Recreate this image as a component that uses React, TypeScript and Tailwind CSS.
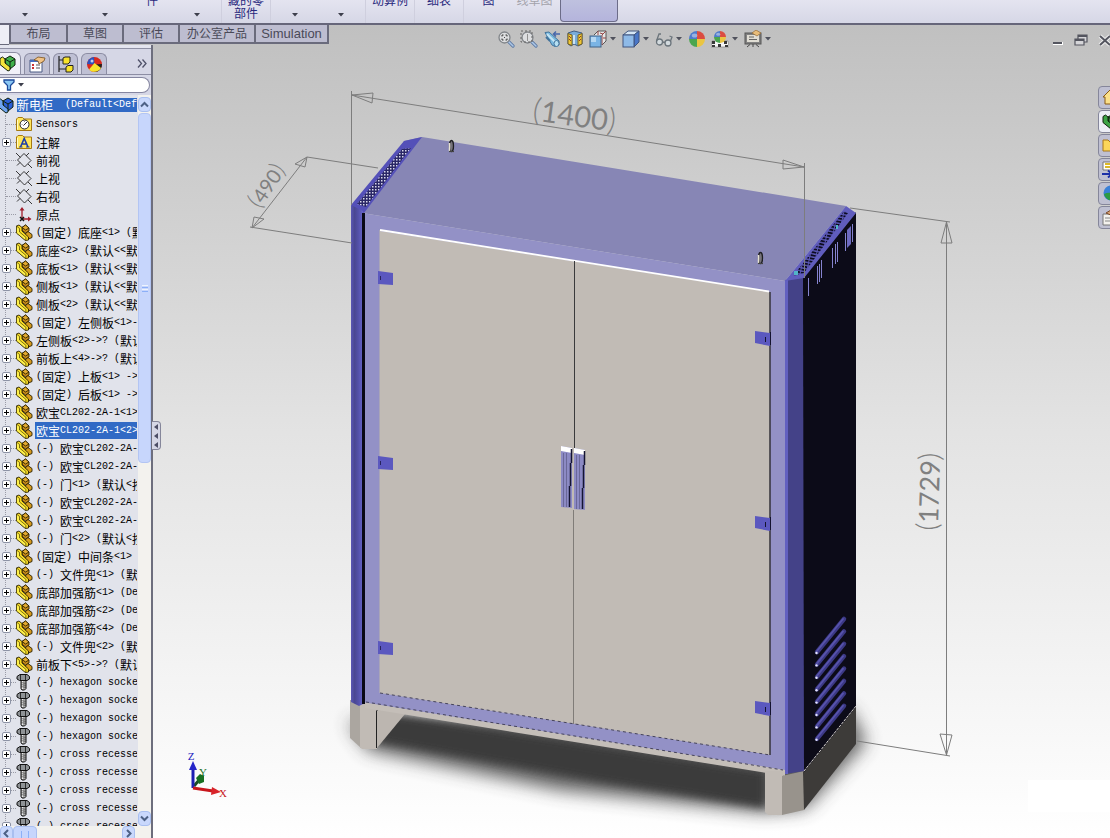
import type { ReactNode } from "react";
import clsx from "clsx";

const UI_FONT = "font-['Liberation_Sans','Noto_Sans_CJK_SC',sans-serif]";

type IconKind = "sensors" | "note" | "plane" | "origin" | "part" | "bolt";
type TreeItem = { icon: IconKind; label: string; leaf?: boolean; selected?: boolean };

const treeItems: TreeItem[] = [
  { icon: "sensors", label: "Sensors", leaf: true },
  { icon: "note", label: "注解" },
  { icon: "plane", label: "前视", leaf: true },
  { icon: "plane", label: "上视", leaf: true },
  { icon: "plane", label: "右视", leaf: true },
  { icon: "origin", label: "原点", leaf: true },
  { icon: "part", label: "(固定) 底座<1> (默认" },
  { icon: "part", label: "底座<2> (默认<<默" },
  { icon: "part", label: "底板<1> (默认<<默" },
  { icon: "part", label: "侧板<1> (默认<<默" },
  { icon: "part", label: "侧板<2> (默认<<默" },
  { icon: "part", label: "(固定) 左侧板<1>-" },
  { icon: "part", label: "左侧板<2>->? (默认" },
  { icon: "part", label: "前板上<4>->? (默认" },
  { icon: "part", label: "(固定) 上板<1> ->" },
  { icon: "part", label: "(固定) 后板<1> ->" },
  { icon: "part", label: "欧宝CL202-2A-1<1>" },
  { icon: "part", label: "欧宝CL202-2A-1<2>", selected: true },
  { icon: "part", label: "(-) 欧宝CL202-2A-" },
  { icon: "part", label: "(-) 欧宝CL202-2A-" },
  { icon: "part", label: "(-) 门<1> (默认<按" },
  { icon: "part", label: "(-) 欧宝CL202-2A-" },
  { icon: "part", label: "(-) 欧宝CL202-2A-" },
  { icon: "part", label: "(-) 门<2> (默认<按" },
  { icon: "part", label: "(固定) 中间条<1>" },
  { icon: "part", label: "(-) 文件兜<1> (默" },
  { icon: "part", label: "底部加强筋<1> (De" },
  { icon: "part", label: "底部加强筋<2> (De" },
  { icon: "part", label: "底部加强筋<4> (De" },
  { icon: "part", label: "(-) 文件兜<2> (默" },
  { icon: "part", label: "前板下<5>->? (默认" },
  { icon: "bolt", label: "(-) hexagon socke" },
  { icon: "bolt", label: "(-) hexagon socke" },
  { icon: "bolt", label: "(-) hexagon socke" },
  { icon: "bolt", label: "(-) hexagon socke" },
  { icon: "bolt", label: "(-) cross recesse" },
  { icon: "bolt", label: "(-) cross recesse" },
  { icon: "bolt", label: "(-) cross recesse" },
  { icon: "bolt", label: "(-) cross recesse" },
  { icon: "bolt", label: "(-) cross recesse" },
];

// latin runs take half of a chinese cell
const Label = ({ text }: { text: string }) => (
  <>
    {text.split(/([\x20-\x7e]+)/).map((run, i) => (
      <span
        key={i}
        className={
          i % 2 ? "font-['Liberation_Mono',monospace] text-[10px]" : undefined
        }
      >
        {run}
      </span>
    ))}
  </>
);

const TreeIcon = ({ kind }: { kind: IconKind }) => (
  <svg viewBox="0 0 17 17" className="h-[17px] w-[17px] shrink-0">
    {kind === "part" && (
      <g stroke="#2c2300" strokeWidth="0.9" strokeLinejoin="round">
        <path d="M6 3.500 9.500 1 13 4V7L9.500 9 6 6.500Z" fill="#c78a18" />
        <path d="M6 3.500 9.500 1 13 4 9.500 6Z" fill="#e3aa30" />
        <path d="M9 10 12 7.500 16 10.500V13.500L12.500 15Z" fill="#d79b1e" />
        <path d="M.500 2 3 1 6 3.500V7L12.500 13V16L9.500 16.500 .500 9Z" fill="#f6da22" />
        <path d="M.500 2 3.500 4.500V8L10 13.500 9.500 16.500 .500 9Z" fill="#fff04a" strokeWidth=".6" />
      </g>
    )}
    {kind === "bolt" && (
      <g stroke="#111" strokeWidth="1">
        <path d="M1 2.500 4 .500H11L13.500 2.500V5L11 6.500H3.500L1 5Z" fill="#8f9396" />
        <path d="M4.500 1V6M9.500 1V6" strokeWidth=".8" />
        <path d="M5 6.500H10V14.500L8.500 16H6L5 14.500Z" fill="#aaa" />
        <path d="M6.500 7V15" stroke="#eee" />
        <path d="M5 8.500 10 9.500M5 10.500 10 11.500M5 12.500 10 13.500" stroke="#444" strokeWidth=".7" />
      </g>
    )}
    {kind === "plane" && (
      <g fill="none" stroke="#222" strokeWidth=".9">
        <path d="M1.500 8 8 1.500 15 8.500 8.500 15Z" />
        <path d="M0 1 4.500 5.500M12 12 16 16M4 10.500 1 13.500M10 4 13 1" />
      </g>
    )}
    {kind === "origin" && (
      <g stroke="#a01d2c" strokeWidth="1.300" fill="#a01d2c">
        <path d="M6 12V3M6 13H13" />
        <path d="M3.500 4.500 6 1 8.500 4.500ZM12 10.500 15.500 13 12 15.500Z" stroke="none" />
        <path d="M4 11 8 15M8 11 4 15" stroke="#111" strokeWidth="1.500" />
      </g>
    )}
    {(kind === "sensors" || kind === "note") && (
      <g>
        <path d="M.500 14.500V3L2 1.500H6.500L8 3H15.500V14.500Z" fill="#ffe65c" stroke="#a57a12" />
        <path d="M1.500 4V13.500" stroke="#fffbc4" />
      </g>
    )}
    {kind === "sensors" && (
      <g fill="#fff" stroke="#222" strokeWidth="1">
        <circle cx="8.500" cy="8.500" r="4.500" />
        <path d="M7.500 9.500 11 6M6 8.500V9M8.500 5.500V6" />
      </g>
    )}
    {kind === "note" && (
      <g fill="none" stroke="#1c3fa8" strokeWidth="1.600">
        <path d="M4.500 13 8.200 4.500 12 13M6 10H10.500" />
        <path d="M3 13H6.500M10 13H13.500" strokeWidth="1" />
      </g>
    )}
  </svg>
);

const Caret = () => (
  <svg viewBox="0 0 6 4" className="h-1 w-1.5 shrink-0">
    <path d="M0 0H6L3 3.500Z" fill="#3d3f4c" />
  </svg>
);

const RibbonItem = (props: { className: string; label?: string; sub?: string; muted?: boolean }) => (
  <button
    className={clsx(
      "flex h-[23px] shrink-0 flex-col items-center justify-end text-xs leading-[13px] whitespace-nowrap",
      props.muted ? "text-[#a3a3ab]" : "text-[#29297d]",
      props.sub ? "pb-0.5" : props.label ? "pb-[15px]" : "pb-1.5",
      props.className
    )}
  >
    {props.label ? <span>{props.label}</span> : <Caret />}
    {props.sub && <span>{props.sub}</span>}
  </button>
);

const Ribbon = () => (
  <header className="flex h-[25px] shrink-0 items-start overflow-hidden border-b-2 border-[#66667a] bg-linear-to-b from-[#e4e4f0] to-[#d6d7e6]">
    <RibbonItem className="w-[50px]" />
    <RibbonItem className="ml-[30px] w-[50px]" />
    <RibbonItem className="ml-[7px] w-[30px]" label="件" />
    <RibbonItem className="ml-[15px] w-[30px]" />
    <RibbonItem className="ml-[9px] w-[50px] border-x border-[#cfcfde]" label="藏的零" sub="部件" />
    <RibbonItem className="ml-[9px] w-[30px]" />
    <RibbonItem className="ml-4 w-[30px]" />
    <RibbonItem className="ml-[9px] w-[50px] border-x border-[#cfcfde]" label="动算例" />
    <RibbonItem className="w-[49px] border-r border-[#cfcfde]" label="细表" />
    <RibbonItem className="w-[49px]" label="图" />
    <RibbonItem className="w-[43px]" label="线草图" muted />
    <button
      aria-label="Instant3D"
      className="ml-1 h-[22px] w-[58px] rounded-b border border-t-0 border-[#6c6c88] bg-linear-to-b from-[#bfc1df] to-[#b4b4dc]"
    />
  </header>
);

const tabs = [
  { label: "布局", width: "w-[59px] border-l-2" },
  { label: "草图", width: "w-14" },
  { label: "评估", width: "w-14" },
  { label: "办公室产品", width: "w-[76px]" },
  { label: "Simulation", width: "w-[73px]" },
];

const CommandTabs = () => (
  <nav className="flex shrink-0">
    <div className="h-5 w-[9px] border-b border-[#6a6b7c] bg-[#eeeef6]" />
    {tabs.map((tab) => (
      <button
        key={tab.label}
        className={clsx(
          "h-[19px] border-r-2 border-b-2 border-[#6a6b7c] bg-[#bdbdd0] leading-4 whitespace-nowrap text-[#4a4a58]",
          tab.label === "Simulation" ? "text-[13px]" : "text-xs",
          tab.width
        )}
      >
        {tab.label}
      </button>
    ))}
  </nav>
);

const ViewIcon = ({ label, caret, children }: { label: string; caret?: boolean; children: ReactNode }) => (
  <button aria-label={label} className={clsx("flex items-center gap-[3px]", caret && "w-7")}>
    <svg viewBox="0 0 18 18" className="h-[18px] w-[18px]">
      {children}
    </svg>
    {caret && <Caret />}
  </button>
);

const ColorBall = ({ cx, cy, r }: { cx: number; cy: number; r: number }) => (
  <g transform={`translate(${cx} ${cy}) scale(${r})`}>
    <path d="M0 0V-1A1 1 0 0 0-1 0Z" fill="#3a6fd0" />
    <path d="M0 0V-1A1 1 0 0 1 1 0Z" fill="#e0392b" />
    <path d="M0 0H1A1 1 0 0 1 0 1Z" fill="#f2c62c" />
    <path d="M0 0H-1A1 1 0 0 0 0 1Z" fill="#36a23c" />
    <ellipse cx="-.3" cy="-.45" rx=".35" ry=".25" fill="#fff" opacity=".45" />
  </g>
);

const Magnifier = () => (
  <g>
    <path d="M11 11 16 16" stroke="#4f6f9f" strokeWidth="3.200" strokeLinecap="round" />
    <path d="M11 11 16 16" stroke="#a9c9ee" strokeWidth="1.500" strokeLinecap="round" />
    <circle cx="7.500" cy="7.500" r="5.500" fill="#e2e4e6" stroke="#777b80" strokeWidth="1.300" />
  </g>
);

const ViewToolbar = () => (
  <div className="mt-[5px] flex h-[18px] items-center gap-[5px] opacity-85">
    <ViewIcon label="Zoom to fit">
      <Magnifier />
      <path d="M5 6.500V5H6.500M8.500 5H10V6.500M10 8.500V10H8.500M6.500 10H5V8.500" fill="none" stroke="#222" />
      <path d="M7 7H8V8H7Z" fill="#333" />
    </ViewIcon>
    <ViewIcon label="Zoom to area">
      <Magnifier />
      <path d="M1 1H12V12H1Z" fill="none" stroke="#555" strokeDasharray="2 2" />
      <path d="M7.500 4V11" stroke="#888" />
    </ViewIcon>
    <ViewIcon label="Previous view">
      <path d="M2 2.500 6 2 16 11 16 15 12 16.500 9 15Z" fill="#6fb9e6" stroke="#2d6695" />
      <path d="M4 4 12 12" stroke="#c8ecfd" strokeWidth="2" />
      <ellipse cx="13.500" cy="13.500" rx="2.500" ry="3" fill="#b6e6fb" stroke="#2d6695" />
      <path d="M3 7 7 11" stroke="#2d6695" strokeWidth="2" />
      <path d="M17 4H11M13 1.500 10.500 4 13 6.500" fill="none" stroke="#3358a8" strokeWidth="1.500" />
    </ViewIcon>
    <ViewIcon label="Section view">
      <path d="M2 3 8 1 16 3V14L12 16 8 14 5 16 2 14Z" fill="#6da9dd" stroke="#2a4b78" />
      <path d="M2 3.500 6 5V15.500L2 14ZM12 5 16 3.500V14L12 15.500Z" fill="#f7c81c" stroke="#6b5208" />
      <path d="M3 6 5 8M3 9 5 11M13 8 15 6M13 11 15 9" stroke="#8a2d10" />
      <path d="M8 5V14" stroke="#cfe8fb" strokeWidth="2" />
    </ViewIcon>
    <ViewIcon label="View orientation" caret>
      <path d="M5 5 9 1H17V11L13 15" fill="#ececec" stroke="#444" />
      <path d="M9 1V5M13 5 17 1M13 5V15M14 8H17M11 3 14 4" fill="none" stroke="#8d3131" />
      <rect x="1" y="6" width="11" height="11" fill="#6eb2ec" stroke="#2b527f" />
      <rect x="2" y="7" width="5" height="5" fill="#b4dcfb" />
    </ViewIcon>
    <ViewIcon label="Display style" caret>
      <path d="M1 5 6 1H17L12 5Z" fill="#dbeeff" stroke="#2a4374" />
      <path d="M12 5 17 1V12L12 17Z" fill="#3569c8" stroke="#2a4374" />
      <rect x="1" y="5" width="11" height="12" fill="#86b9ef" stroke="#2a4374" />
    </ViewIcon>
    <ViewIcon label="Hide items" caret>
      <g fill="#d6dfe4" stroke="#5d6870" strokeWidth="1.300">
        <circle cx="4.500" cy="12" r="3" />
        <circle cx="13" cy="13" r="3" />
        <path d="M1.500 11 4 4 6 4M7.500 12 10 12.500M15.500 11 17 7 14.500 6" fill="none" />
      </g>
    </ViewIcon>
    <ViewIcon label="Edit appearance">
      <ColorBall cx={9} cy={9} r={8} />
    </ViewIcon>
    <ViewIcon label="Apply scene" caret>
      <path d="M1 11H17L18 17H0Z" fill="#fff" stroke="#555" strokeWidth=".5" />
      <path d="M1 11H4V14H1ZM7 14H10V17H7ZM13 11H16V14H13ZM1 15H4V17H1ZM14 15H17V17H14Z" fill="#222" />
      <ColorBall cx={9} cy={7} r={6} />
    </ViewIcon>
    <ViewIcon label="View settings" caret>
      <rect x="1" y="3" width="16" height="11" fill="#777" stroke="#444" />
      <rect x="3" y="5" width="12" height="7" fill="#e6e3d8" />
      <path d="M5 7H10M5 9.500H13" stroke="#555" />
      <path d="M8 3 12 0 17 3 13 6Z" fill="#f0bd6e" stroke="#8a5a1c" strokeWidth=".7" />
      <path d="M9 14V17M3 17 6 14.500M15 17 12 14.500" stroke="#333" />
    </ViewIcon>
  </div>
);

const WindowButtons = () => (
  <div className="mt-2 -mr-0.5 ml-auto flex items-center gap-2.5">
    <button aria-label="Minimize">
      <svg viewBox="0 0 12 14" className="h-3.5 w-3">
        <path d="M1 10.500H11" stroke="#fff" strokeWidth="3" />
        <path d="M1 10H10" stroke="#54555f" strokeWidth="2" />
      </svg>
    </button>
    <button aria-label="Restore">
      <svg viewBox="0 0 14 14" className="h-3.5 w-3.5" fill="#d5d5d8" stroke="#54555f" strokeWidth="1.200">
        <path d="M4 2H13V9H4Z" />
        <path d="M4 3H13" strokeWidth="2" />
        <path d="M1 6H10V12H1Z" />
        <path d="M1 7H10" strokeWidth="2" />
      </svg>
    </button>
    <button aria-label="Close">
      <svg viewBox="0 0 14 14" className="h-3.5 w-3.5">
        <path d="M2 3 12 12M12 3 2 12" stroke="#eee" strokeWidth="4" />
        <path d="M2 3 12 12M12 3 2 12" stroke="#54555f" strokeWidth="2" />
      </svg>
    </button>
  </div>
);

const AssemblyIcon = ({ main, side }: { main: string; side: string }) => (
  <g stroke="#10220f" strokeWidth="1" strokeLinejoin="round">
    <path d="M6 4 11 1 16 4 16 10 11 14 7 11Z" fill={side} />
    <path d="M6 4 11 7 16 4M11 7V14" fill="none" />
    <path d="M1 3.500 3.500 2 6 4V8L11 12V15L9 16 1 9.500Z" fill={main} />
  </g>
);

const PanelTabs = () => (
  <div className="mt-1 flex h-[26px] items-end gap-[3px] border-b border-[#8c8da3]">
    <button aria-label="Feature manager" className="h-[22px] w-[21px] overflow-hidden rounded-tr-md border-t border-r border-[#8c8da3] bg-[#f1f1f8]">
      <svg viewBox="1 0 17 17" className="h-[17px] w-[17px]">
        <AssemblyIcon main="#f4e33c" side="#3fb04a" />
      </svg>
    </button>
    <button aria-label="Property manager" className="flex h-[21px] w-[26px] items-center justify-center rounded-t-md border border-b-0 border-[#8c8da3] bg-[#bfc0d4]">
      <svg viewBox="0 0 17 17" className="h-[17px] w-[17px]">
        <path d="M1 4H13V16H1Z" fill="#fff" stroke="#4b5b84" />
        <path d="M1 5H13" stroke="#4670c0" strokeWidth="2" />
        <path d="M3 9H5M3 12H5" stroke="#c33" strokeWidth="2" />
        <path d="M7 9H11M7 12H11" stroke="#555" />
        <path d="M5 4 9 1 16 2 15 5 10 8 9 5Z" fill="#f1c386" stroke="#79511d" strokeWidth=".8" />
      </svg>
    </button>
    <button aria-label="Configurations" className="flex h-[21px] w-[25px] items-center justify-center rounded-t-md border border-b-0 border-[#8c8da3] bg-[#bfc0d4]">
      <svg viewBox="0 0 17 17" className="h-[17px] w-[17px]">
        <path d="M2 0V16M2 4H6M2 13H9" stroke="#222" strokeWidth="1.200" />
        <path d="M6 2 8 1H13V6L11 8H6Z" fill="#f7e22a" stroke="#222" />
        <path d="M9 11 11 9.500H16V14L14 16H9Z" fill="#f7e22a" stroke="#222" />
      </svg>
    </button>
    <button aria-label="Display manager" className="flex h-[21px] w-[26px] items-center justify-center rounded-t-md border border-b-0 border-[#8c8da3] bg-[#bfc0d4]">
      <svg viewBox="0 0 17 17" className="h-[17px] w-[17px]">
        <circle cx="8.500" cy="8.500" r="7.500" fill="#d8281e" />
        <path d="M8.500 8.500 1 8A7.500 7.500 0 0 1 8 1Z" fill="#2a52c0" />
        <path d="M8.500 8.500 16 8A7.500 7.500 0 0 1 8.500 16Z" fill="#222" />
        <path d="M8.500 7 15 12A7.500 7.500 0 0 1 3 13.500Z" fill="#f8e32c" />
        <circle cx="6" cy="5" r="1.500" fill="#fff" opacity=".7" />
      </svg>
    </button>
    <button aria-label="More tabs" className="mr-1 mb-[6px] ml-auto">
      <svg viewBox="0 0 10 9" className="h-[9px] w-2.5" fill="none" stroke="#50526a" strokeWidth="1.300">
        <path d="M1 .500 4.500 4.500 1 8.500M5.500 .500 9 4.500 5.500 8.500" />
      </svg>
    </button>
  </div>
);

const ScrollButton = ({ label, path }: { label: string; path: string }) => (
  <button aria-label={label} className="flex h-[15px] w-[13px] shrink-0 items-center justify-center rounded-sm border border-[#a9bff0] bg-[#c9d8fc]">
    <svg viewBox="0 0 9 9" className="h-[9px] w-[9px]" fill="none" stroke="#4d6185" strokeWidth="2">
      <path d={path} />
    </svg>
  </button>
);

const FeatureTree = () => (
  <div className="flex min-h-0 flex-1">
    <div className="w-[137px] shrink-0 overflow-hidden font-['Noto_Sans_CJK_SC',sans-serif] text-xs whitespace-pre text-black">
      <div className="flex h-5 items-center gap-[3px]">
        <svg viewBox="3 0 14 17" className="h-[17px] w-3.5 shrink-0">
          <AssemblyIcon main="#6fa4f0" side="#2b5fd4" />
        </svg>
        <span className="flex h-3.5 flex-1 items-center bg-[#316ac5] leading-[14px] text-white">
          <Label text="新电柜  (Default<Def" />
        </span>
      </div>
      <ul className="ml-[5px] border-l border-dotted border-[#9a9ba6]">
        {treeItems.map((item, i) => (
          <li key={i} className="-ml-1 flex h-[18px] items-center">
            {item.leaf ? (
              <span className="ml-1 w-[10px] shrink-0 border-t border-dotted border-[#9a9ba6]" />
            ) : (
              <>
                <button aria-label="Expand" className="h-[9px] w-[9px] shrink-0 rounded-xs border border-[#8d93a5] bg-white">
                  <svg viewBox="0 0 7 7" className="h-[7px] w-[7px]">
                    <path d="M1 3.500H6M3.500 1V6" stroke="#000" />
                  </svg>
                </button>
                <span className="w-[5px] shrink-0 border-t border-dotted border-[#9a9ba6]" />
              </>
            )}
            <TreeIcon kind={item.icon} />
            <span
              className={clsx(
                "ml-0.5 flex h-[17px] shrink-0 grow items-center pl-px leading-[17px]",
                item.selected && "bg-[#316ac5] text-white"
              )}
            >
              <Label text={item.label} />
            </span>
          </li>
        ))}
      </ul>
    </div>
    <div className="ml-px flex w-[13px] shrink-0 flex-col bg-[#f3f2ee] pt-0.5">
      <ScrollButton label="Scroll up" path="M1 6.500 4.500 3 8 6.500" />
      <div className="mt-px flex h-[350px] flex-col items-center justify-center gap-px rounded-sm border border-[#b3c5f3] bg-[#c7d6fc]">
        <span className="h-px w-1.5 bg-[#eef4fe]" />
        <span className="h-px w-1.5 bg-[#8cb0f8]" />
        <span className="h-px w-1.5 bg-[#eef4fe]" />
        <span className="h-px w-1.5 bg-[#8cb0f8]" />
      </div>
      <div className="mt-auto">
        <ScrollButton label="Scroll down" path="M1 2.500 4.500 6 8 2.500" />
      </div>
    </div>
  </div>
);

const FeaturePanel = () => (
  <aside className="relative flex w-[153px] shrink-0 flex-col border-r-2 border-[#6d6e7d] bg-[#e1e3eb]">
    <div className="h-[30px] shrink-0 bg-[#d6d7e6]">
      <div className="h-1 border-b border-[#8f90a4] bg-[#e4e5ef]" />
      <div className="-mt-1">
        <PanelTabs />
      </div>
    </div>
    <div className="flex h-5 shrink-0 items-center bg-[#d6d7e6]">
      <label className="flex h-4 w-[150px] items-center gap-[3px] rounded-r-full border border-l-0 border-[#8586a0] bg-white pl-[3px]">
        <svg viewBox="0 0 12 12" className="h-3 w-3 shrink-0">
          <path d="M1 1H11V3L7.500 6.500V11H4.500V6.500L1 3Z" fill="#8cc8f4" stroke="#1d4b9c" strokeWidth="1.300" />
        </svg>
        <Caret />
        <input aria-label="Filter" className="w-full min-w-0 bg-transparent text-xs outline-none" />
      </label>
    </div>
    <FeatureTree />
    <div className="flex h-3 shrink-0 overflow-hidden bg-[#f3f2ee]">
      <ScrollButton label="Scroll left" path="M6 1 2.500 4.500 6 8" />
      <div className="h-4 w-6 shrink-0 rounded-sm border border-[#a9bff0] bg-[#c7d6fc]">
        <div className="mx-auto mt-1 h-2 w-2 border-x border-[#8cb0f8]" />
      </div>
      <div className="ml-auto pr-4">
        <ScrollButton label="Scroll right" path="M3 1 6.500 4.500 3 8" />
      </div>
    </div>
    <button
      aria-label="Collapse panel"
      className="absolute top-[376px] -right-[10px] flex h-[29px] w-[9px] flex-col items-center justify-around rounded-r border border-l-0 border-[#85869a] bg-[#d6d7e6]"
    >
      {[0, 1, 2].map((n) => (
        <svg key={n} viewBox="0 0 4 6" className="h-1.5 w-1">
          <path d="M4 0V6L0 3Z" fill="#4d4e66" />
        </svg>
      ))}
    </button>
  </aside>
);

const TaskPane = () => (
  <div className="absolute top-[41px] right-0 flex w-3 flex-col gap-px overflow-hidden">
    {[
      <path key="home" d="M1 8 8 1 15 8H13V15H3V8Z" fill="#fbe08a" stroke="#8a5a14" />,
      <AssemblyIcon key="lib" main="#3da446" side="#2f7d36" />,
      <path key="folder" d="M1 14V3H6L8 5H15V14Z" fill="#fbd65a" stroke="#a8761a" />,
      <g key="palette">
        <path d="M1 1H12V9H1Z" fill="#fff" stroke="#777" />
        <path d="M3 3H9M3 6H9" stroke="#dcb928" strokeWidth="2" />
        <path d="M0 13H8M6 9.500 10 13 6 16.500" stroke="#1b2fa8" strokeWidth="2" fill="none" />
      </g>,
      <g key="web">
        <circle cx="9" cy="8" r="7.500" fill="#3a80d8" />
        <path d="M2 9Q8 6 13 10L9 15.500Q3 14 2 9Z" fill="#2d9a44" />
      </g>,
      <g key="props">
        <path d="M1 5H13V16H1Z" fill="#f4f2ee" stroke="#777" />
        <path d="M4 4 9 1 14 3 11 7Z" fill="#d8a376" stroke="#7a4a2a" />
        <path d="M3 9H10M3 12H10" stroke="#888" />
      </g>,
    ].map((icon, i) => (
      <button
        key={i}
        aria-label="Task pane tab"
        className={clsx(
          "h-[23px] w-6 rounded-l border border-[#85869a] pl-[3px]",
          i === 1 ? "bg-[#eceef6]" : "bg-[#bfc0d2]"
        )}
      >
        <svg viewBox="0 0 17 17" className="h-[17px] w-[17px]">
          {icon}
        </svg>
      </button>
    ))}
  </div>
);

const Cabinet = () => (
  <g>
    {/* ground shadow */}
    <path d="M348 722 368 750 560 790 765 812 806 808 866 742 850 710Z" fill="#444" opacity=".85" filter="url(#blur)" />
    <path d="M377 712 404 715 765 772V808L600 782 377 742Z" fill="#3a3a3a" filter="url(#soft)" />

    {/* plinth */}
    <path d="M350 700 365 700 361 748 350 738Z" fill="#aba6a0" />
    <path d="M360 703H377V749H362L360 747Z" fill="#c1bbb5" />
    <path d="M377 708 405 714 377 748Z" fill="#bcb6b0" />
    <path d="M376.500 711V748M376.500 711 381 706" stroke="#222" fill="none" />
    <path d="M365 701 785 769V776L365 708Z" fill="#c4beb8" />
    <path d="M765 771H783V815H768L765 812Z" fill="#c1bbb5" />
    <path d="M782 776 804 771V810L782 815Z" fill="#98938c" />
    <path d="M803 772 856 706V744L804 810Z" fill="#3d3b39" />

    {/* roof and frame */}
    <path d="M404 141 422 137 846 206 785 281 362 213Z" fill="#8786b5" />
    <path d="M362 213 785 281V770L362 702Z" fill="#9391c6" />
    <path d="M351 205 404 141 422 137 364 213 352 208Z" fill="#5450b8" />
    <path d="M357 204 402 149 411 148 366 207Z" fill="url(#mesh)" />
    <path d="M351 205 363 211V704L359 706 351 702Z" fill="url(#leftpost)" />
    <path d="M362 213H365V704H362Z" fill="#090916" />

    {/* doors */}
    <path d="M380 231 770 292V755L380 693Z" fill="#c1bbb5" />
    <path d="M380 230 769 291.500" stroke="#fff" strokeWidth="1.800" />
    <path d="M379.500 230V693" stroke="#a9a5b8" />
    <path d="M380 693 770 755M366 702 783 770" stroke="#45435a" strokeDasharray="3 3" />
    <path d="M770 292V755" stroke="#33323a" strokeWidth="1.500" />
    <path d="M574.500 261V448" stroke="#3a3a3c" />
    <path d="M573.500 510V724" stroke="#807c78" />

    {/* hinges */}
    {[271, 456, 641].map((y) => (
      <g key={y}>
        <path d={`M378 ${y} 393 ${y + 2}V${y + 14}L378 ${y + 13}Z`} fill="#5b58bf" />
        <path d={`M380.500 ${y + 5}V${y + 9}`} stroke="#27245e" />
      </g>
    ))}
    {[331, 516, 701].map((y) => (
      <g key={y}>
        <path d={`M755 ${y} 770 ${y + 2}V${y + 15}L755 ${y + 12}Z`} fill="#5b58bf" />
        <path d={`M765.500 ${y + 6}V${y + 11}M770.500 ${y + 1}V${y + 14}`} stroke="#15132f" />
      </g>
    ))}

    {/* handles */}
    {[
      [561, 446],
      [574, 448],
    ].map(([x, y]) => (
      <g key={x} transform={`translate(${x} ${y})`}>
        <path d="M0 0 11 2V62L0 61Z" fill="#8c8ac4" />
        <path d="M0 0 11 2V7L0 5Z" fill="#fff" />
        <path d="M2.500 7V61M5.500 7V61" stroke="#6a6898" />
        <path d="M10.500 3V17M9.500 17V40M8.500 40V61" stroke="#141432" strokeWidth="1.500" />
      </g>
    ))}

    {/* right side */}
    <path d="M785 280 804 277V771L785 774Z" fill="#444288" />
    <path d="M785 280H788V774H785Z" fill="#6260c0" />
    <path d="M803 278 856 212V707L804 772Z" fill="#0c0b18" />
    <path d="M785 281 846 206 856 213 804 278Z" fill="#605dbd" />
    <path d="M793 276 844 211 848 213 804 273Z" fill="url(#slots)" />
    <path d="M794 271H798V275H794ZM836 225H838V229H836Z" fill="#52b4c8" />
    <path d="M808.500 278V296M817.500 266V284M819.500 264V282M821.500 260V278M832.500 248V268M835.500 244V264M837.500 242V262M845.500 233V251M852.500 224V242" stroke="#8583cf" />
    <path d="M847 230 851 226V244L847 248Z" fill="#6d6abf" />
    <path d="M804 771 856 706" stroke="#d8d4d0" strokeDasharray="3 1" />
    {Array.from({ length: 8 }, (_, i) => (
      <g key={i} transform={`translate(0 ${i * 12.4})`} strokeLinecap="round">
        <path d="M817 652 844 619" stroke="#3c3986" strokeWidth="4.500" />
        <path d="M817 651 843 619" stroke="#5753ac" strokeWidth="1.800" />
        <circle cx="816.500" cy="653" r="1.200" fill="#e4e4ff" />
      </g>
    ))}

    {/* lifting eyes */}
    {[
      [451, 146],
      [760, 258],
    ].map(([x, y]) => (
      <g key={x} transform={`translate(${x} ${y})`}>
        <ellipse cx=".5" rx="2" ry="5.500" fill="#77747c" stroke="#1e1e22" strokeWidth="1.300" />
        <path d="M-1.500 -3V5" stroke="#e6e2d0" strokeWidth="1.500" />
        <path d="M-2 5.500H3" stroke="#444" strokeWidth="1.200" />
      </g>
    ))}
  </g>
);

const Dimensions = () => (
  <g>
    <g fill="none" stroke="#7d7d7d">
      <path d="M351.500 91V205M804.500 163V278M352 95 804 167M352 95 373 93 372 103ZM804 167 783 160 783 169Z" />
      <path d="M307 157 378 168M250 227 352 243M307 157 252 228M307 157 295 164 305 167ZM252 228 254 217 264 219Z" />
      <path d="M850 208 950 222M857 741 950 756M946.500 222V755M946.500 222 941 243H952ZM946.500 755 940 734 952 735Z" />
    </g>
    <g className="font-['Lato',sans-serif]" fill="#808080" textAnchor="middle">
      <text transform="translate(573 126) rotate(8)" fontSize="29">
        <tspan fontSize="32" fontWeight="300">(</tspan>1400<tspan fontSize="32" fontWeight="300">)</tspan>
      </text>
      <text transform="translate(273 190) rotate(-56)" fontSize="20">
        <tspan fontSize="24" fontWeight="300">(</tspan>490<tspan fontSize="24" fontWeight="300">)</tspan>
      </text>
      <text transform="translate(939 492) rotate(-88)" fontSize="27">
        <tspan fontSize="30" fontWeight="300">(</tspan>1729<tspan fontSize="30" fontWeight="300">)</tspan>
      </text>
    </g>
  </g>
);

const Triad = () => (
  <g>
    <path d="M194 786 200 779" stroke="#1d4a24" strokeWidth="3" />
    <path d="M196 778 200 774 204 776V782L199 784Z" fill="#187022" />
    <path d="M193 788V768" stroke="#1e1eb4" strokeWidth="3" />
    <path d="M189 770 193 761 197 770Z" fill="#2626c8" />
    <path d="M193 788 213 791" stroke="#c8161c" strokeWidth="3" />
    <path d="M212 787 221 792 211 795Z" fill="#d8242a" />
    <g className="font-['Liberation_Serif',serif]" fontSize="11" textAnchor="middle">
      <text x="191" y="760" fill="#2020c0">Z</text>
      <text x="203" y="776" fill="#187022">Y</text>
      <text x="223" y="797" fill="#c8161c">X</text>
    </g>
  </g>
);

const Viewport = () => (
  <main className="relative min-w-0 flex-1">
    <svg viewBox="153 45 957 793" className="absolute inset-0 h-full w-full">
      <defs>
        <filter id="blur" x="-20%" y="-50%" width="140%" height="200%">
          <feGaussianBlur stdDeviation="9" />
        </filter>
        <filter id="soft" x="-10%" y="-20%" width="120%" height="140%">
          <feGaussianBlur stdDeviation="4" />
        </filter>
        <linearGradient id="leftpost">
          <stop offset="0" stopColor="#5a57b4" />
          <stop offset=".3" stopColor="#4a4792" />
          <stop offset=".6" stopColor="#5350a8" />
          <stop offset="1" stopColor="#6664c8" />
        </linearGradient>
        <pattern id="mesh" width="3" height="3" patternUnits="userSpaceOnUse">
          <rect width="3" height="3" fill="#2a2766" />
          <rect width="1.500" height="1.500" fill="#d8d8ea" />
        </pattern>
        <pattern id="slots" width="6" height="3.200" patternUnits="userSpaceOnUse" patternTransform="rotate(12)">
          <rect width="6" height="3.200" fill="#5a57b4" />
          <rect width="5" height="1.800" fill="#0c0b20" />
        </pattern>
      </defs>
      <Cabinet />
      <Dimensions />
      <Triad />
      <rect x="1028" y="780" width="82" height="32" fill="#fff" />
    </svg>
    <TaskPane />
  </main>
);

export default function App() {
  return (
    <div className={clsx("flex h-screen flex-col overflow-hidden", UI_FONT)}>
      <Ribbon />
      <div className="flex min-h-0 flex-1 flex-col bg-linear-to-b from-[#c0c0c0] via-[#e3e3e3] to-[#ffffff]">
        <div className="flex h-5 shrink-0 items-start">
          <CommandTabs />
          <div className="ml-[168px]">
            <ViewToolbar />
          </div>
          <WindowButtons />
        </div>
        <div className="flex min-h-0 flex-1">
          {/* the collapse handle hangs over the viewport */}
          <div className="z-10 flex">
            <FeaturePanel />
          </div>
          <Viewport />
        </div>
      </div>
    </div>
  );
}
